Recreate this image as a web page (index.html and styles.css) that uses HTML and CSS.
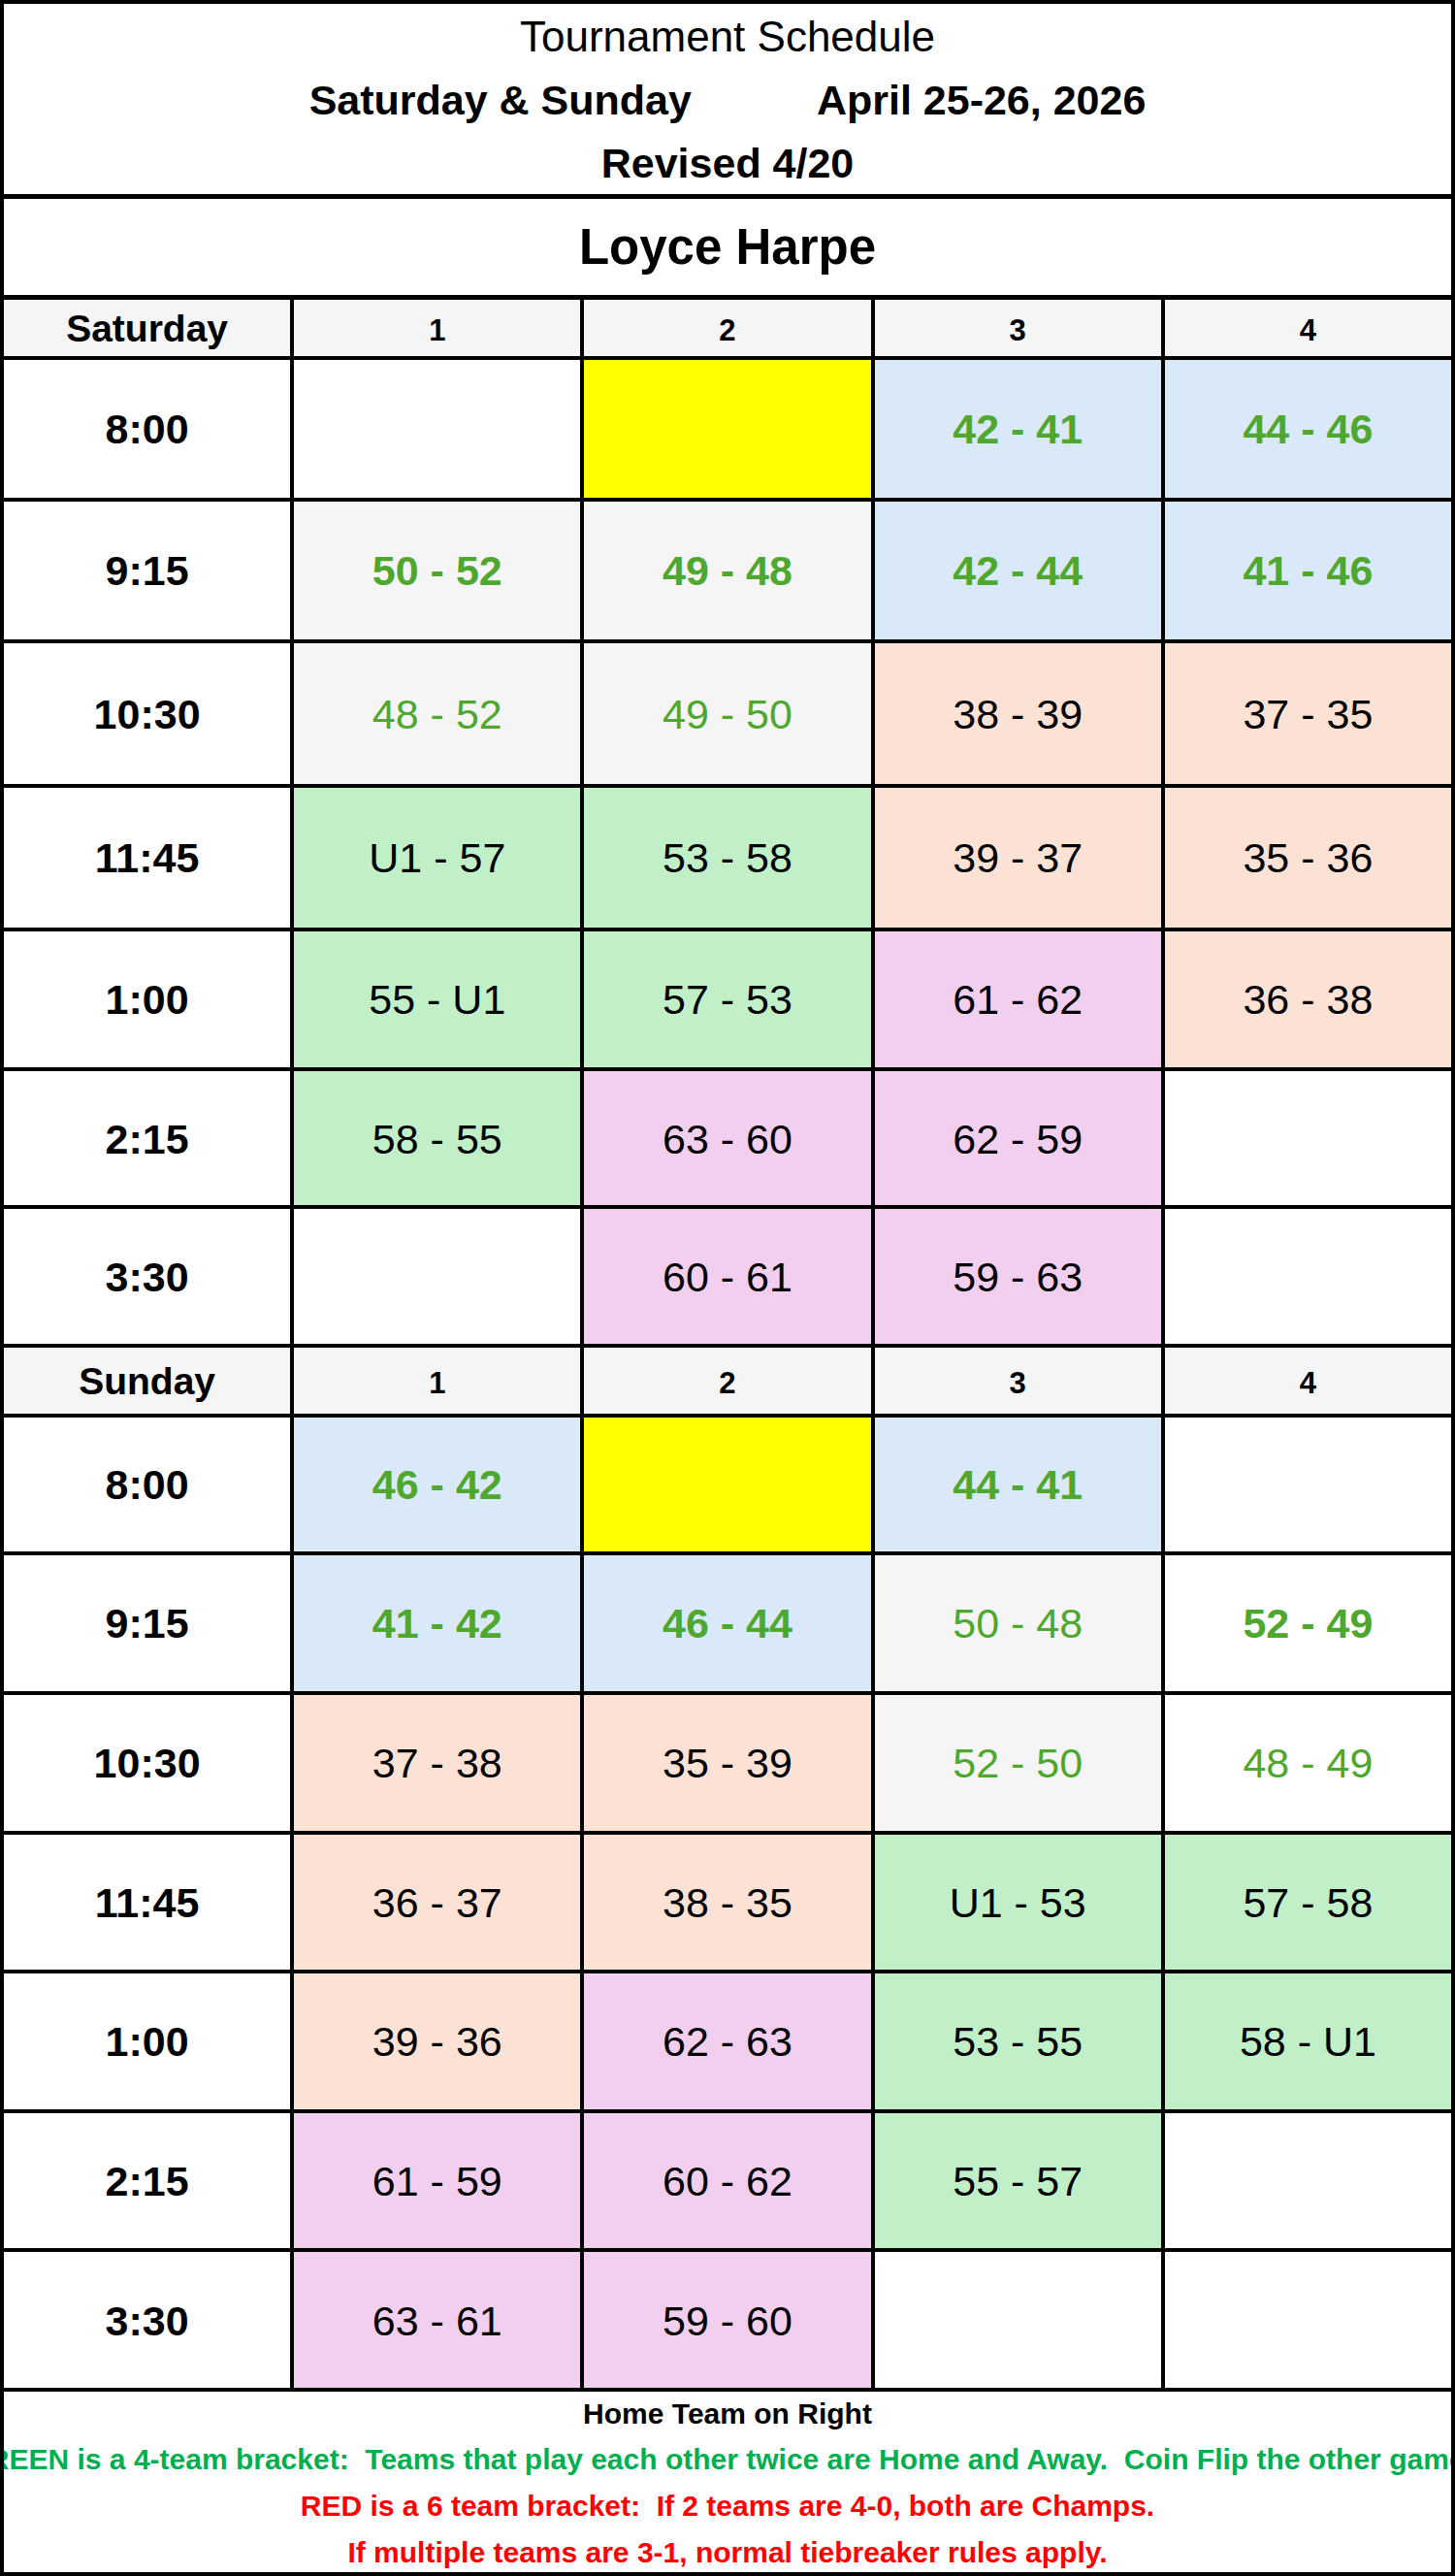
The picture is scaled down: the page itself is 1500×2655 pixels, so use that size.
FILE: index.html
```html
<!DOCTYPE html>
<html lang="en">
<head>
<meta charset="utf-8">
<title>Tournament Schedule</title>
<link rel="stylesheet" href="styles.css">
</head>
<body>
<div class="sheet">
  <header class="title-box">
    <div class="title">Tournament Schedule</div>
    <div class="dates"><span>Saturday &amp; Sunday</span><span>April 25-26, 2026</span></div>
    <div class="revised">Revised 4/20</div>
  </header>
  <div class="venue">Loyce Harpe</div>
  <div class="schedule">
    <div class="c head day">Saturday</div>
    <div class="c head num">1</div>
    <div class="c head num">2</div>
    <div class="c head num">3</div>
    <div class="c head num">4</div>

    <div class="c time">8:00</div>
    <div class="c"></div>
    <div class="c yellow"></div>
    <div class="c blue gb">42 - 41</div>
    <div class="c blue gb">44 - 46</div>

    <div class="c time">9:15</div>
    <div class="c gray gb">50 - 52</div>
    <div class="c gray gb">49 - 48</div>
    <div class="c blue gb">42 - 44</div>
    <div class="c blue gb">41 - 46</div>

    <div class="c time">10:30</div>
    <div class="c gray gr">48 - 52</div>
    <div class="c gray gr">49 - 50</div>
    <div class="c peach">38 - 39</div>
    <div class="c peach">37 - 35</div>

    <div class="c time">11:45</div>
    <div class="c mint">U1 - 57</div>
    <div class="c mint">53 - 58</div>
    <div class="c peach">39 - 37</div>
    <div class="c peach">35 - 36</div>

    <div class="c time">1:00</div>
    <div class="c mint">55 - U1</div>
    <div class="c mint">57 - 53</div>
    <div class="c pink">61 - 62</div>
    <div class="c peach">36 - 38</div>

    <div class="c time">2:15</div>
    <div class="c mint">58 - 55</div>
    <div class="c pink">63 - 60</div>
    <div class="c pink">62 - 59</div>
    <div class="c"></div>

    <div class="c time">3:30</div>
    <div class="c"></div>
    <div class="c pink">60 - 61</div>
    <div class="c pink">59 - 63</div>
    <div class="c"></div>

    <div class="c head day">Sunday</div>
    <div class="c head num">1</div>
    <div class="c head num">2</div>
    <div class="c head num">3</div>
    <div class="c head num">4</div>

    <div class="c time">8:00</div>
    <div class="c blue gb">46 - 42</div>
    <div class="c yellow"></div>
    <div class="c blue gb">44 - 41</div>
    <div class="c"></div>

    <div class="c time">9:15</div>
    <div class="c blue gb">41 - 42</div>
    <div class="c blue gb">46 - 44</div>
    <div class="c gray gr">50 - 48</div>
    <div class="c gb">52 - 49</div>

    <div class="c time">10:30</div>
    <div class="c peach">37 - 38</div>
    <div class="c peach">35 - 39</div>
    <div class="c gray gr">52 - 50</div>
    <div class="c gr">48 - 49</div>

    <div class="c time">11:45</div>
    <div class="c peach">36 - 37</div>
    <div class="c peach">38 - 35</div>
    <div class="c mint">U1 - 53</div>
    <div class="c mint">57 - 58</div>

    <div class="c time">1:00</div>
    <div class="c peach">39 - 36</div>
    <div class="c pink">62 - 63</div>
    <div class="c mint">53 - 55</div>
    <div class="c mint">58 - U1</div>

    <div class="c time">2:15</div>
    <div class="c pink">61 - 59</div>
    <div class="c pink">60 - 62</div>
    <div class="c mint">55 - 57</div>
    <div class="c"></div>

    <div class="c time">3:30</div>
    <div class="c pink">63 - 61</div>
    <div class="c pink">59 - 60</div>
    <div class="c"></div>
    <div class="c"></div>
  </div>
  <footer class="notes">
    <div class="note home">Home Team on Right</div>
    <div class="note green"><span>GREEN is a 4-team bracket:&nbsp; Teams that play each other twice are Home and Away.&nbsp; Coin Flip the other games.</span></div>
    <div class="note red">RED is a 6 team bracket:&nbsp; If 2 teams are 4-0, both are Champs.</div>
    <div class="note red">If multiple teams are 3-1, normal tiebreaker rules apply.</div>
  </footer>
</div>
</body>
</html>
```

FILE: styles.css
```css
html, body {
  margin: 0;
  padding: 0;
  background: #ffffff;
}

body {
  font-family: "Liberation Sans", Arial, sans-serif;
  color: #000000;
}

.sheet {
  width: 1500px;
  height: 2655px;
  box-sizing: border-box;
  border: 4px solid #000000;
  display: flex;
  flex-direction: column;
  overflow: hidden;
}

.title-box {
  box-sizing: border-box;
  border-bottom: 5px solid #000000;
  height: 201px;
  padding-top: 1px;
  text-align: center;
}

.title {
  font-size: 44px;
  line-height: 65px;
  font-weight: 400;
}

.dates {
  font-size: 43px;
  line-height: 66px;
  font-weight: 700;
  display: flex;
  justify-content: center;
  gap: 129px;
}

.revised {
  font-size: 43px;
  line-height: 64px;
  font-weight: 700;
}

.venue {
  height: 104px;
  box-sizing: border-box;
  border-bottom: 5px solid #000000;
  font-size: 51px;
  line-height: 99px;
  font-weight: 700;
  text-align: center;
}

.schedule {
  display: grid;
  grid-template-columns: repeat(5, 1fr);
  grid-template-rows:
    58px
    141.5px 142px 145.5px 143.5px 140.5px 138px 139px
    68px
    137.5px 140px 140px 139.5px 139.5px 139.5px 140px;
  gap: 4px;
  background: #000000;
}

.c {
  background: #ffffff;
  display: flex;
  align-items: center;
  justify-content: center;
  font-size: 43px;
  font-weight: 400;
  white-space: nowrap;
  padding-top: 2px;
  box-sizing: border-box;
}

.head {
  background: #f5f5f5;
  font-weight: 700;
}

.head.day {
  font-size: 39px;
}

.head.num {
  font-size: 31px;
  padding-top: 6px;
}

.time {
  font-weight: 700;
}

.yellow { background: #ffff00; }
.blue { background: #dae9f8; }
.gray { background: #f5f5f5; }
.peach { background: #fbe2d5; }
.mint { background: #c1f0c8; }
.pink { background: #f2ceef; }

.gb {
  color: #4ea72e;
  font-weight: 700;
}

.gr {
  color: #4ea72e;
  font-weight: 400;
}

.notes {
  flex: 1;
  border-top: 4px solid #000000;
  display: flex;
  flex-direction: column;
  font-size: 30px;
  font-weight: 700;
  line-height: 48px;
}

.note {
  display: flex;
  justify-content: center;
  white-space: nowrap;
}

.home {
  line-height: 46px;
}

.green {
  color: #00b050;
}

.red {
  color: #ff0000;
}
```
